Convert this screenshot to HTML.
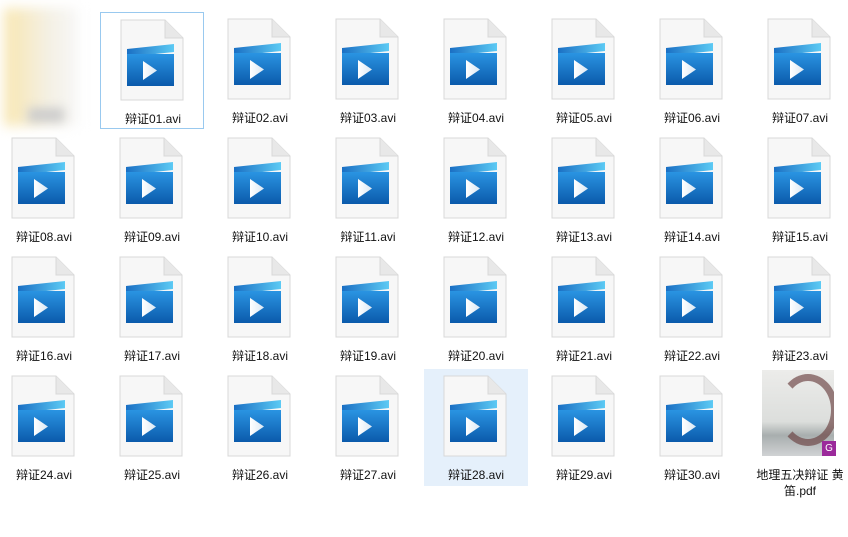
<!DOCTYPE html><html><head><meta charset="utf-8"><style>
body{margin:0;width:848px;height:537px;background:#fff;position:relative;overflow:hidden;font-family:"Liberation Sans","Noto Sans CJK SC",sans-serif;}
.c{position:absolute;width:104px;height:117px;box-sizing:border-box;}
.c svg{position:absolute;left:19px;top:6px;}
.t{position:absolute;left:0;width:104px;top:98px;text-align:center;font-size:12px;color:#111;line-height:16px;}
.sel{background:#e5f0fb;}
.bd{border:1px solid #99c9ef;}
</style></head><body>
<svg width="0" height="0" style="position:absolute"><defs>
<linearGradient id="g" x1="0" y1="0" x2="0" y2="1"><stop offset="0" stop-color="#2a94e2"/><stop offset="1" stop-color="#0b5aab"/></linearGradient>
<linearGradient id="g2" x1="0" y1="0" x2="1" y2="0"><stop offset="0" stop-color="#1a6fc4"/><stop offset="1" stop-color="#5ccaf4"/></linearGradient>
<linearGradient id="g3" x1="0" y1="0" x2="1" y2="0"><stop offset="0" stop-color="#ffffff"/><stop offset="1" stop-color="#dbe8f4"/></linearGradient>
<symbol id="ic" viewBox="0 0 64 82">
<path d="M1 1H45L63 19V81H1Z" fill="#f7f7f7" stroke="#d8d8d8"/>
<path d="M45 1V19H63" fill="#e8e8e8" stroke="#d8d8d8"/>
<path d="M7 30L54 25V33L7 38Z" fill="url(#g2)"/>
<rect x="7" y="35" width="47" height="32" fill="url(#g)"/>
<path d="M23 42L23 61L37 51.5Z" fill="url(#g3)"/>
</symbol></defs></svg>
<div style="position:absolute;left:4px;top:8px;width:74px;height:118px;background:linear-gradient(90deg,#f8e6b0,#f4f0e4 60%,#f7f7f7);filter:blur(6px);"></div>
<div style="position:absolute;left:28px;top:108px;width:36px;height:14px;background:#ccc;filter:blur(5px);"></div>
<div id="g0"></div>
<script>
var n=1,h='';
for(var r=0;r<4;r++)for(var c=0;c<8;c++){
 if(r==0&&c==0)continue;
 var x=-8+c*108,y=12+r*119;
 if(r==3&&c==7){
  h+='<div class="c" style="left:'+x+'px;top:'+y+'px"><div style="position:absolute;left:14px;top:1px;width:72px;height:86px;background:linear-gradient(180deg,#ececea,#dcdedc 60%,#a8aeae 76%,#d0d2d4);overflow:hidden"><div style="position:absolute;left:16px;top:4px;width:46px;height:58px;border-radius:50%;border:7px solid #6a4040;border-left-color:transparent;opacity:.65"></div></div><div style="position:absolute;left:74px;top:72px;width:14px;height:15px;background:#9b2a9b;color:#fff;font-size:10px;text-align:center;line-height:15px">G</div><div class="t" style="top:98px">地理五决辩证 黄<br>笛.pdf</div></div>';
  continue;}
 var s=(n<10?'0':'')+n;
 var cls=n==28?' sel':(n==1?' bd':'');
 h+='<div class="c'+cls+'" style="left:'+x+'px;top:'+y+'px"><svg width="64" height="82"><use href="#ic"/></svg><div class="t">辩证'+s+'.avi</div></div>';
 n++;}
document.getElementById('g0').outerHTML=h;
</script>
</body></html>
